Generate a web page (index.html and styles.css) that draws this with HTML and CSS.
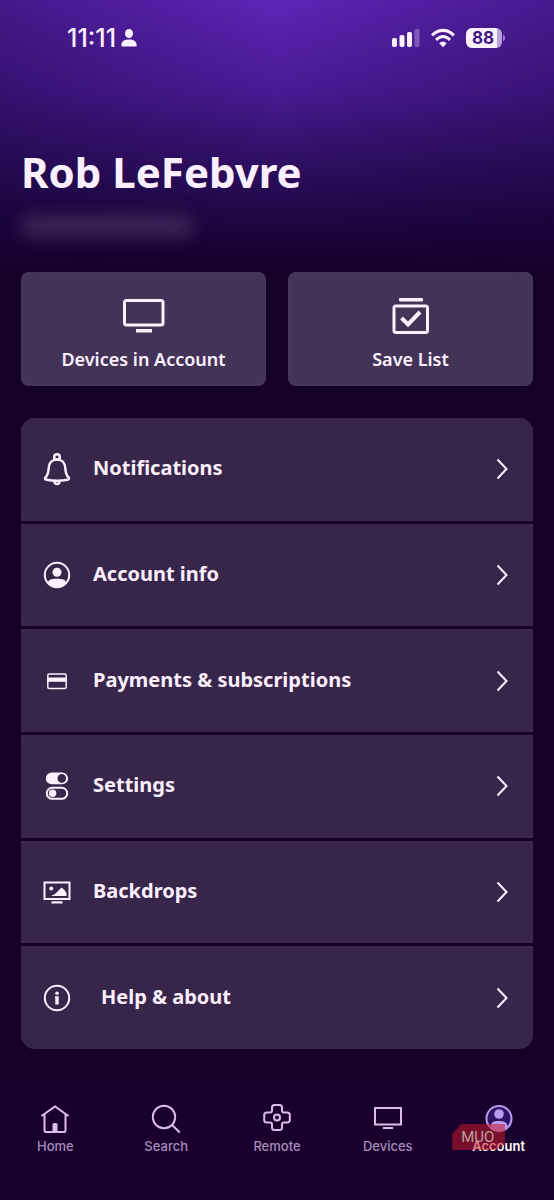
FILE: index.html
```html
<!DOCTYPE html>
<html lang="en">
<head>
<meta charset="utf-8">
<meta name="viewport" content="width=device-width, initial-scale=1">
<title>Account</title>
<link rel="stylesheet" href="styles.css">
</head>
<body>
<div class="app">
  <header class="status">
    <div class="status-group status-time">
      <span>11:11</span>
      <svg class="focus-icon" viewBox="0 0 16 18" aria-hidden="true"><ellipse cx="8" cy="4.5" rx="4" ry="4.5"/><path d="M0.3 16.5C0.3 12.5 3.4 10.6 8 10.6s7.7 1.9 7.7 5.9q0 .9-1 .9H1.300q-1 0-1-.9z"/></svg>
    </div>
    <div class="status-group status-signals">
      <svg class="signal-icon" viewBox="0 0 28 20" aria-hidden="true"><rect x="0" y="10" width="5" height="9" rx="1.800"/><rect x="7.500" y="7" width="5" height="12" rx="1.800"/><rect x="15" y="4" width="5" height="15" rx="1.800"/><rect x="22.500" y="1" width="5" height="18" rx="1.800" opacity=".3"/></svg>
      <svg class="wifi-icon" viewBox="0 0 26 20" aria-hidden="true"><path class="line" d="M2 7.300Q13-2.500 24 7.300M6 11.800Q13 5.200 20 11.800"/><path d="M9.200 15.200Q13 11.600 16.800 15.200L13 19.200z"/></svg>
      <span class="battery"><span class="battery-level">88</span></span>
    </div>
  </header>

  <main class="content">
    <section class="profile">
      <h1 class="name">Rob LeFebvre</h1>
      <div class="email-hidden"></div>
    </section>

    <div class="tiles">
      <button class="tile" type="button">
        <svg class="tile-icon" viewBox="0 0 44 40" aria-hidden="true"><rect class="line" x="2.500" y="4.500" width="38.500" height="24.500" rx="2"/><rect x="14" y="33" width="16" height="3.500"/></svg>
        <span>Devices in Account</span>
      </button>
      <button class="tile" type="button">
        <svg class="tile-icon" viewBox="0 0 44 40" aria-hidden="true"><rect x="10" y="2" width="24" height="3.500" rx="1"/><rect class="line" x="5" y="10" width="33.500" height="26.500" rx="2"/><path class="line thick" d="M12.500 22l6.500 6.500L31 16"/></svg>
        <span>Save List</span>
      </button>
    </div>

    <nav class="menu" aria-label="Account">
      <a class="row" href="#">
        <svg class="row-icon" viewBox="0 0 32 34" aria-hidden="true"><g class="line"><circle cx="16" cy="5" r="2.800"/><path d="M16 7.500c-5 0-8 3.500-8.300 8.500-.2 5-1.200 7.500-3.400 9.600-.8 1.300 0 1.900 1.200 2.100 7 1.500 14 1.500 21 0 1.200-.2 2-.8 1.200-2.100-2.200-2.100-3.200-4.600-3.400-9.600C24 11 21 7.500 16 7.500z"/><path d="M13.500 29.500c0 3.300 5 3.300 5 0"/></g></svg>
        <span class="label">Notifications</span>
        <svg class="chevron" viewBox="0 0 14 24" aria-hidden="true"><path d="M2.500 2.500L11.500 12l-9 9.500"/></svg>
      </a>
      <a class="row" href="#">
        <svg class="row-icon" viewBox="0 0 32 34" aria-hidden="true"><circle class="line thin" cx="16" cy="17" r="12.200"/><circle cx="16" cy="14.300" r="4.500"/><path d="M7 25C7 21.500 11 20.800 16 20.800s9 .7 9 4.200c-2 3-5.500 4.500-9 4.500S9 28 7 25z"/></svg>
        <span class="label">Account info</span>
        <svg class="chevron" viewBox="0 0 14 24" aria-hidden="true"><path d="M2.500 2.500L11.500 12l-9 9.500"/></svg>
      </a>
      <a class="row" href="#">
        <svg class="row-icon" viewBox="0 0 32 34" aria-hidden="true"><rect class="line hair" x="6.800" y="10" width="18.400" height="14.500" rx="1.500"/><rect x="6.500" y="13.500" width="19" height="4.300"/></svg>
        <span class="label">Payments &amp; subscriptions</span>
        <svg class="chevron" viewBox="0 0 14 24" aria-hidden="true"><path d="M2.500 2.500L11.500 12l-9 9.500"/></svg>
      </a>
      <a class="row" href="#">
        <svg class="row-icon" viewBox="0 0 32 34" aria-hidden="true"><path fill-rule="evenodd" d="M10.700 3.500h10.500a5.900 5.900 0 010 11.800H10.700a5.900 5.900 0 010-11.800zM20.800 5.100a4.300 4.300 0 100 8.600a4.300 4.300 0 000-8.600z"/><rect class="line thin" x="5.800" y="18.800" width="20.400" height="11" rx="5.500"/><circle cx="11.600" cy="24.300" r="3.700"/></svg>
        <span class="label">Settings</span>
        <svg class="chevron" viewBox="0 0 14 24" aria-hidden="true"><path d="M2.500 2.500L11.500 12l-9 9.500"/></svg>
      </a>
      <a class="row" href="#">
        <svg class="row-icon" viewBox="0 0 32 34" aria-hidden="true"><rect class="line thin" x="3.500" y="7.500" width="25" height="16.500"/><circle cx="10.300" cy="13.500" r="2"/><path d="M10 21l4-2 6.500-6.500 2.500 2 2.500 3.500v3z"/><rect x="10.500" y="26.300" width="11" height="2.200"/></svg>
        <span class="label">Backdrops</span>
        <svg class="chevron" viewBox="0 0 14 24" aria-hidden="true"><path d="M2.500 2.500L11.500 12l-9 9.500"/></svg>
      </a>
      <a class="row" href="#">
        <svg class="row-icon" viewBox="0 0 32 34" aria-hidden="true"><circle class="line thin" cx="16" cy="17" r="12.200"/><circle cx="16" cy="12.300" r="1.800"/><path d="M14 15.200h3.700v8.300h-3.400V17.300H14z"/></svg>
        <span class="label label-inset">Help &amp; about</span>
        <svg class="chevron" viewBox="0 0 14 24" aria-hidden="true"><path d="M2.500 2.500L11.500 12l-9 9.500"/></svg>
      </a>
    </nav>
  </main>

  <nav class="tabs" aria-label="Main">
    <a class="tab" href="#">
      <svg class="tab-icon" viewBox="0 0 32 32" aria-hidden="true"><path class="line" d="M2.500 14L16 4.500 29.500 14M5.500 12.500v16q0 1.500 1.500 1.500h18q1.500 0 1.500-1.500v-16"/><path d="M13.500 30v-7.500q0-1.500 1.500-1.500h2q1.500 0 1.500 1.500V30z"/></svg>
      <span>Home</span>
    </a>
    <a class="tab" href="#">
      <svg class="tab-icon" viewBox="0 0 32 32" aria-hidden="true"><g class="line"><circle cx="14" cy="15" r="11.200"/><path d="M21.800 22.800l8 7.700"/></g></svg>
      <span>Search</span>
    </a>
    <a class="tab" href="#">
      <svg class="tab-icon" viewBox="0 0 32 32" aria-hidden="true"><g class="line"><path d="M13.500 3h5q2.500 0 2.500 2.500v3q0 2 2 2h3q2.800 0 2.800 2.500v5q0 2.500-2.800 2.500h-3q-2 0-2 2v3q0 2.500-2.500 2.500h-5q-2.500 0-2.500-2.500v-3q0-2-2-2H6q-2.800 0-2.800-2.500v-5Q3.200 10.500 6 10.500h3q2 0 2-2V5.500q0-2.500 2.500-2.500z"/><circle cx="16" cy="15.500" r="3"/></g></svg>
      <span>Remote</span>
    </a>
    <a class="tab" href="#">
      <svg class="tab-icon" viewBox="0 0 32 32" aria-hidden="true"><rect class="line" x="3" y="6" width="26" height="16.500"/><rect x="11" y="25" width="10" height="2"/></svg>
      <span>Devices</span>
    </a>
    <a class="tab tab-active" href="#" aria-current="page">
      <svg class="tab-icon" viewBox="0 0 32 32" aria-hidden="true"><circle cx="16" cy="16.500" r="12.500" fill="#2c1264"/><circle class="line" cx="16" cy="16.500" r="12.500"/><circle cx="16" cy="12" r="4.800"/><path d="M7.500 25C7.500 20 11 19 16 19s8.500 1 8.500 6c-2.500 2.500-5.300 3.500-8.500 3.500S10 27.500 7.500 25z"/></svg>
      <span>Account</span>
      <span class="watermark">MUO</span>
    </a>
  </nav>
</div>
</body>
</html>
```
FILE: styles.css
```css
* { box-sizing: border-box; }

body {
  margin: 0;
  background: #15002a;
  color: #fcf0ff;
  font-family: "Noto Sans", "Open Sans", sans-serif;
}

a { color: inherit; text-decoration: none; }
svg { fill: currentColor; flex: none; }
.line { fill: none; stroke: currentColor; }

.app {
  display: flex;
  flex-direction: column;
  min-height: 100vh;
  background:
    linear-gradient(90deg, rgba(21, 0, 50, .35), transparent 50%, rgba(21, 0, 50, .3)) top / 100% 270px no-repeat,
    linear-gradient(#5e24b8, #5420a6 40px, #491a94 90px, #3a1478 130px, #2c0e5e 170px, #200848 210px, #15002a 270px);
}

.status {
  display: flex;
  align-items: center;
  justify-content: space-between;
  height: 76px;
  padding: 0 52px 0 67px;
  font-family: Inter, sans-serif;
}
.status-group { display: flex; align-items: center; }
.status-time { gap: 5px; font-size: 25px; font-weight: 500; line-height: 28px; }
.status-signals { gap: 10px; }
.focus-icon { width: 16px; height: 18px; }
.signal-icon { width: 28px; height: 20px; }
.wifi-icon { width: 26px; height: 20px; }
.wifi-icon .line { stroke-width: 3; }
.battery {
  position: relative;
  width: 36px;
  border-radius: 6px;
  background: linear-gradient(90deg, #fcf0ff 31px, #b9a0dc 31px);
}
.battery::after {
  content: "";
  position: absolute;
  top: 7px;
  right: -3px;
  width: 2px;
  height: 6px;
  border-radius: 0 2px 2px 0;
  background: #9a7cd0;
}
.battery-level {
  display: block;
  padding-right: 2px;
  color: #3b1983;
  font-size: 17px;
  font-weight: 700;
  line-height: 20px;
  text-align: center;
}

.content {
  flex: 1;
  display: flex;
  flex-direction: column;
  padding: 68px 21px 0;
}
.profile { height: 128px; }
.name { margin: 0; font-size: 42px; font-weight: 700; line-height: 56px; }
.email-hidden {
  width: 172px;
  height: 22px;
  margin-top: 15px;
  border-radius: 8px;
  background: #3c2355;
  filter: blur(8px);
}

.tiles { display: grid; grid-template-columns: 1fr 1fr; gap: 22px; }
.tile {
  display: flex;
  flex-direction: column;
  align-items: center;
  gap: 11px;
  padding: 24px 12px 15px;
  border: 0;
  border-radius: 8px;
  background: #433357;
  box-shadow: inset 0 0 8px #4a3961;
  color: inherit;
  font: 600 18px/24px "Noto Sans", "Open Sans", sans-serif;
}
.tile-icon { width: 44px; height: 40px; }
.tile-icon .line { stroke-width: 3; }
.tile-icon .thick { stroke-width: 4; }

.menu {
  flex: 1;
  display: flex;
  flex-direction: column;
  gap: 3px;
  margin-top: 32px;
  border-radius: 14px;
  overflow: hidden;
}
.row {
  flex: 1;
  display: flex;
  align-items: center;
  gap: 20px;
  min-height: 64px;
  padding: 0 24px 0 20px;
  background: #38254a;
  box-shadow: inset 0 0 6px #3e2a54;
}
.row-icon { width: 32px; height: 34px; }
.row-icon .line { stroke-width: 2.500; }
.row-icon .thin { stroke-width: 2; }
.row-icon .hair { stroke-width: 1.500; }
.label { flex: 1; padding-bottom: 2px; font-size: 20px; font-weight: 700; line-height: 28px; }
.label-inset { padding-left: 8px; }
.chevron { width: 14px; height: 24px; fill: none; stroke: currentColor; stroke-width: 2; }

.tabs {
  display: grid;
  grid-template-columns: repeat(5, 1fr);
  height: 120px;
  margin-top: 31px;
  padding-top: 22px;
  background: linear-gradient(#15002a, #1a002e 24px);
}
.tab {
  position: relative;
  display: flex;
  flex-direction: column;
  align-items: center;
  gap: 3px;
  color: #a78bba;
  font-family: Inter, sans-serif;
  font-size: 13px;
  font-weight: 500;
  line-height: 18px;
}
.tab-icon { width: 32px; height: 32px; color: #d9bdeb; }
.tab-icon .line { stroke-width: 2; }
.tab-active { color: #fff; font-weight: 600; }
.tab-active .tab-icon { color: #b99bf0; }
.watermark {
  position: absolute;
  top: 22px;
  left: 9px;
  width: 53px;
  padding-left: 9px;
  background: rgba(200, 24, 44, .55);
  clip-path: polygon(9px 0, 100% 0, 100% 20px, 44px 100%, 0 100%, 0 10px);
  color: #b9a3a0;
  font-family: Roboto, sans-serif;
  font-size: 15px;
  font-weight: 400;
  line-height: 26px;
}
```
